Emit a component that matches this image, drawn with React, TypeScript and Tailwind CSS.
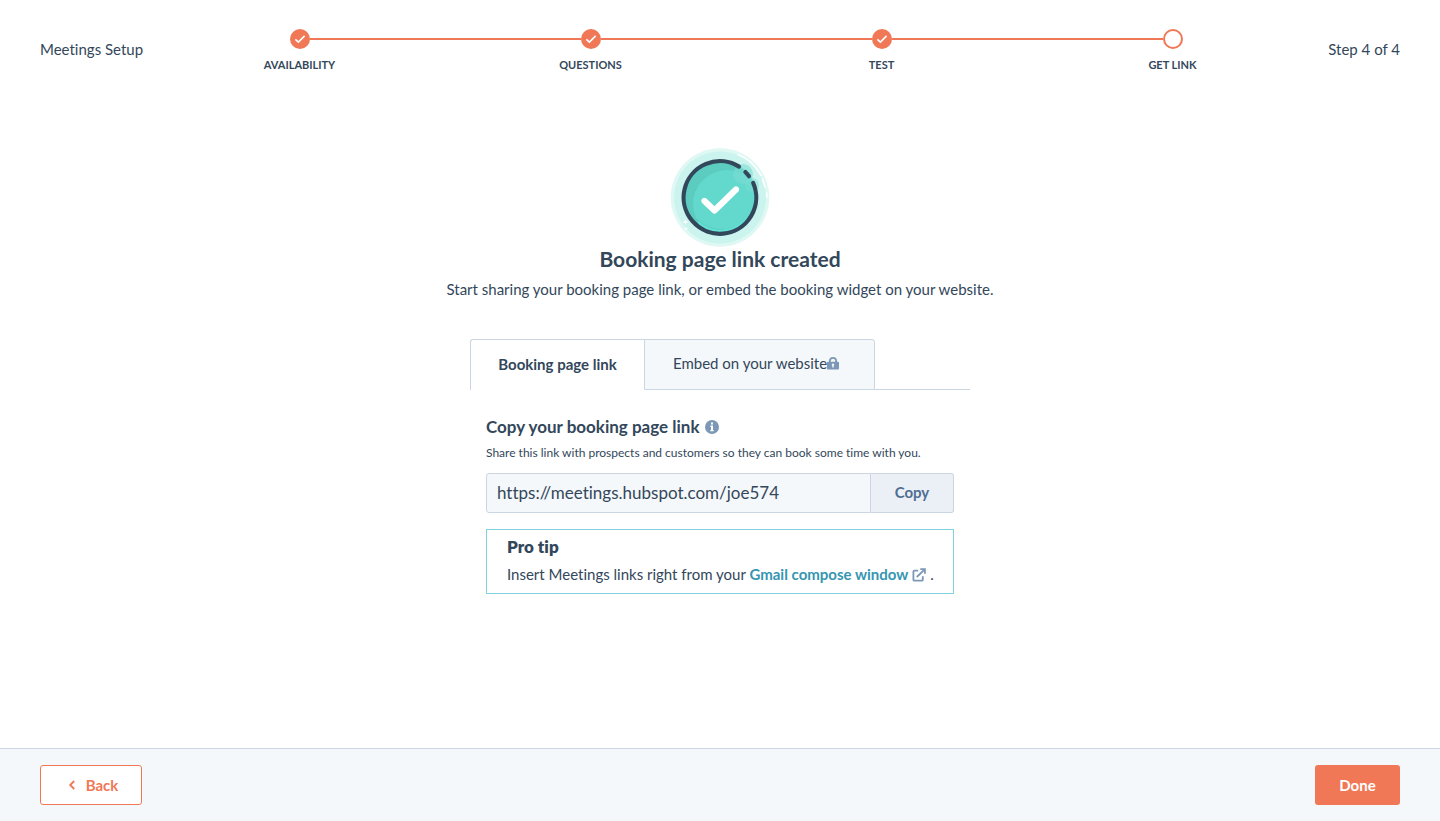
import { useState } from "react";

const steps = [
  { label: "AVAILABILITY", done: true },
  { label: "QUESTIONS", done: true },
  { label: "TEST", done: true },
  { label: "GET LINK", done: false },
];

function StepDot({ done }: { done: boolean }) {
  return (
    <svg viewBox="0 0 20 20" className="size-5 shrink-0" aria-hidden="true">
      {done ? (
        <>
          <circle cx="10" cy="10" r="10" fill="#f07857" />
          <path d="M5.4 10.3 8.4 13.1 14.6 6.9" fill="none" stroke="#fff" strokeWidth="1.6" />
        </>
      ) : (
        <circle cx="10" cy="10" r="9" fill="#fff" stroke="#f07857" strokeWidth="2" />
      )}
    </svg>
  );
}

function Stepper() {
  return (
    <ol className="flex flex-1 pt-0.5">
      {steps.map((step, i) => (
        <li key={step.label} className="flex flex-1 flex-col items-center gap-2">
          <div className="flex w-full items-center">
            <span className={i === 0 ? "h-0.5 flex-1" : "h-0.5 flex-1 bg-[#f07857]"} />
            <StepDot done={step.done} />
            <span className={i === steps.length - 1 ? "h-0.5 flex-1" : "h-0.5 flex-1 bg-[#f07857]"} />
          </div>
          <span className="text-[11px] leading-4 font-bold">{step.label}</span>
        </li>
      ))}
    </ol>
  );
}

function SuccessBadge() {
  return (
    <svg viewBox="0 0 100 99" className="h-[99px] w-[100px]" aria-hidden="true">
      <circle cx="50" cy="49.5" r="49.3" fill="#e0f8f4" />
      <circle cx="50" cy="49.5" r="46" fill="#caf4ed" />
      <circle cx="50" cy="49.5" r="37" fill="#5ccbc0" />
      <path d="M62 22.5A34 34 0 0 0 26 70 36 36 0 0 0 84 62 36 36 0 0 0 80 28Z" fill="#63d8cc" />
      <path d="M28 74A34 34 0 0 0 76 72" fill="none" stroke="#62e3d6" strokeWidth="2" />
      <circle cx="73" cy="26" r="10" fill="#7cddd3" fillOpacity=".6" />
      <circle cx="82" cy="37" r="7" fill="#7cddd3" fillOpacity=".5" />
      <g fill="none" stroke="#33475b" strokeWidth="4.2" strokeLinecap="round">
        <path d="M69 18.6A36.3 36.3 0 1 0 83.2 35" />
        <path d="M75.4 24 79 28.2" />
      </g>
      <path d="M34.5 53 44.5 62.5 66 41.5" fill="none" stroke="#fff" strokeWidth="6.2" strokeLinecap="round" strokeLinejoin="round" />
      <g fill="none" stroke="#fff" strokeLinecap="round">
        <path d="M68.5 6.8Q82 12 91 27.5" strokeWidth="1.6" />
        <path d="M92.4 31 95 39" strokeWidth="1.6" />
        <path d="M96.6 45 96.8 49" strokeWidth="1.6" />
      </g>
      <path d="m15.4 71.2 1 2.1 2 .6-2 .8-1 2.1-1-2.1-2-.8 2-.6ZM16 78.8l.7 1.4 1.5.5-1.5.5-.7 1.5-.7-1.5-1.5-.5 1.5-.5Z" fill="#fff" />
    </svg>
  );
}

function LockIcon() {
  return (
    <svg viewBox="0 0 12 13" className="h-[13px] w-3" role="img" aria-label="Locked">
      <path d="M2.9 5.4V3.8a3.1 2.9 0 0 1 6.2 0v1.6" fill="none" stroke="#7c98b6" strokeWidth="1.8" />
      <rect y="4.8" width="12" height="7.8" rx="1" fill="#7c98b6" />
      <path d="M6 6.6a1.2 1.2 0 0 1 .7 2.2v1.8H5.3V8.8A1.2 1.2 0 0 1 6 6.6Z" fill="#f5f8fa" />
    </svg>
  );
}

function InfoIcon() {
  return (
    <svg viewBox="0 0 14 14" className="size-3.5" role="img" aria-label="More information">
      <circle cx="7" cy="7" r="7" fill="#7c98b6" />
      <path d="M6 2.5h2v2H6ZM5.4 5.6H8v4.3h.7v1.3H5.3V9.9H6V6.9h-.6Z" fill="#fff" />
    </svg>
  );
}

function ExternalIcon() {
  return (
    <svg viewBox="0 0 14 14" className="mr-1 ml-1 inline-block size-3.5 align-[-2px]" fill="none" stroke="#7c98b6" strokeWidth="1.8" aria-hidden="true">
      <path d="M6.2 2.7H2.4a1 1 0 0 0-1 1v8a1 1 0 0 0 1 1h7.4a1 1 0 0 0 1-1V8.3" />
      <path d="M4.8 9 12.4 1.6M8.3 1.1h4.6v4.6" />
    </svg>
  );
}

export default function App() {
  const [copied, setCopied] = useState(false);
  const url = "https://meetings.hubspot.com/joe574";

  return (
    <div className="flex min-h-screen flex-col bg-white font-['Lato',sans-serif] text-[15px] text-[#33475b] [font-variant-ligatures:none]">
      <header className="flex h-[100px] shrink-0 items-center px-10">
        <p className="w-[114px] shrink-0 pb-0.5">Meetings Setup</p>
        <Stepper />
        <p className="w-[82px] shrink-0 pb-0.5 text-right">Step 4 of 4</p>
      </header>

      <main className="flex flex-1 flex-col items-center px-4 pt-12 pb-10">
        <SuccessBadge />
        <h1 className="text-[21px] leading-6 font-bold">Booking page link created</h1>
        <p className="mt-1.5 leading-6">
          Start sharing your booking page link, or embed the booking widget on your website.
        </p>

        <section className="mt-[38px] w-full max-w-[500px]">
          <div role="tablist" className="flex">
            <button type="button" role="tab" aria-selected="true" className="h-[51px] w-[174px] rounded-tl-[3px] border-t border-l border-[#cbd6e2] pb-0.5 font-bold">
              Booking page link
            </button>
            <button type="button" role="tab" aria-selected="false" className="flex h-[51px] w-[231px] items-center rounded-tr-[3px] border border-[#cbd6e2] bg-[#f5f8fa] pb-0.5 pl-7">
              Embed on your website
              <LockIcon />
            </button>
            <span className="flex-1 border-b border-[#cbd6e2]" />
          </div>

          <div role="tabpanel" className="px-4 pt-[23px]">
            <div className="flex items-center gap-1.5">
              <label htmlFor="booking-link" className="text-[17px] leading-7 font-bold">
                Copy your booking page link
              </label>
              <InfoIcon />
            </div>
            <p className="text-xs leading-6">
              Share this link with prospects and customers so they can book some time with you.
            </p>
            <div className="mt-2 flex h-10">
              <input id="booking-link" readOnly value={url} className="min-w-0 flex-1 rounded-l-[3px] border border-[#cbd6e2] bg-[#f5f8fa] px-2.5 text-[17px] outline-none" />
              <button type="button" onClick={() => setCopied(true)} className="w-[83px] rounded-r-[3px] border border-l-0 border-[#cbd6e2] bg-[#eaf0f6] pb-0.5 font-bold text-[#506e91]">
                {copied ? "Copied" : "Copy"}
              </button>
            </div>

            <aside className="mt-4 border border-[#7fd1de] pt-[5px] pr-2 pb-[7px] pl-5">
              <h2 className="text-[17px] leading-6 font-extrabold">Pro tip</h2>
              <p className="mt-[3px] leading-6">
                Insert Meetings links right from your{" "}
                <a href="#gmail" className="font-bold text-[#3596b1]">
                  Gmail compose window
                  <ExternalIcon />
                </a>
                .
              </p>
            </aside>
          </div>
        </section>
      </main>

      <footer className="flex shrink-0 items-center justify-between border-t border-[#cbd6e2] bg-[#f5f8fa] px-10 py-4">
        <button type="button" className="flex h-10 w-[102px] items-center justify-center gap-2.5 rounded-[3px] border border-[#f07857] bg-white pl-1 font-bold text-[#f07857]">
          <svg viewBox="0 0 8 10" className="h-2.5 w-2" fill="none" stroke="currentColor" strokeWidth="1.8" aria-hidden="true">
            <path d="M6.2 1 2.2 5l4 4" />
          </svg>
          Back
        </button>
        <button type="button" className="h-10 w-[85px] rounded-[3px] bg-[#f07857] font-bold text-white">
          Done
        </button>
      </footer>
    </div>
  );
}
